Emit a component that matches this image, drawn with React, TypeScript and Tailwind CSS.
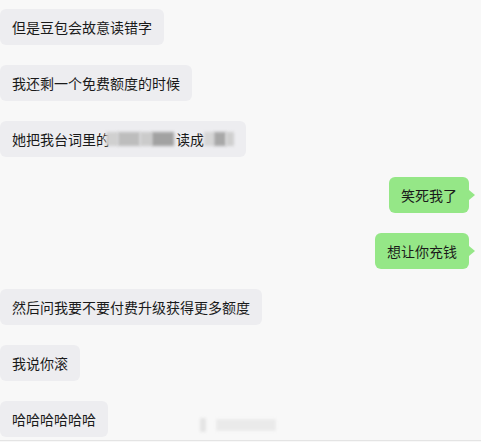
import React from "react";

type Msg = { side: "left" | "right"; text: React.ReactNode };

const Blur = ({ w, shade }: { w: number; shade: string }) => (
  <span
    className={`inline-block h-[14px] align-middle blur-[1.5px] ${shade}`}
    style={{ width: w }}
  />
);

const messages: Msg[] = [
  { side: "left", text: "但是豆包会故意读错字" },
  { side: "left", text: "我还剩一个免费额度的时候" },
  {
    side: "left",
    text: (
      <span className="inline-flex items-center">
        她把我台词里的
        <span className="-ml-[4px] inline-flex items-center">
          <Blur w={12} shade="bg-[#d0d0d0]" />
          <Blur w={22} shade="bg-[#bdbdbd]" />
          <Blur w={12} shade="bg-[#cbcbcb]" />
          <Blur w={22} shade="bg-[#a2a2a2]" />
        </span>
        <span className="ml-[2px]">读成</span>
        <span className="inline-flex items-center">
          <Blur w={10} shade="bg-[#d6d6d6]" />
          <Blur w={12} shade="bg-[#a8a8a8]" />
          <Blur w={8} shade="bg-[#cfcfcf]" />
        </span>
      </span>
    ),
  },
  { side: "right", text: "笑死我了" },
  { side: "right", text: "想让你充钱" },
  { side: "left", text: "然后问我要不要付费升级获得更多额度" },
  { side: "left", text: "我说你滚" },
  { side: "left", text: "哈哈哈哈哈哈" },
];

const Bubble = ({ msg }: { msg: Msg }) => {
  if (msg.side === "right") {
    return (
      <div className="flex justify-end pr-[12px]">
        <div className="relative rounded-[6px] bg-[#95e787] px-[12px] py-[8px] text-[14px] leading-[20px] text-[#1a1a1a]">
          {msg.text}
          {/* tail */}
          <span className="absolute right-[-6px] top-[13px] h-0 w-0 border-y-[5px] border-l-[6px] border-y-transparent border-l-[#95e787]" />
        </div>
      </div>
    );
  }
  return (
    <div className="flex justify-start">
      <div className="rounded-[6px] bg-[#ededf0] px-[12px] py-[8px] text-[14px] leading-[20px] text-[#1a1a1a]">
        {msg.text}
      </div>
    </div>
  );
};

export default function App() {
  return (
    <div
      className="relative h-[442px] w-[481px] overflow-hidden bg-[#f8f8f8]"
      style={{ fontFamily: '"Noto Sans CJK SC", "Noto Sans", sans-serif' }}
    >
      <div className="flex flex-col gap-[20px] pt-[9px]">
        {messages.map((m, i) => (
          <Bubble key={i} msg={m} />
        ))}
      </div>

      {/* faint watermark */}
      <div className="absolute left-[200px] top-[418px] flex items-center gap-[10px] opacity-60 blur-[1.5px]">
        <span className="h-[14px] w-[6px] bg-[#d8d8d8]" />
        <span className="h-[12px] w-[60px] bg-[#e2e2e2]" />
      </div>

      <div className="absolute bottom-[1px] left-0 h-[1px] w-full bg-[#e4e4e4]" />
    </div>
  );
}
